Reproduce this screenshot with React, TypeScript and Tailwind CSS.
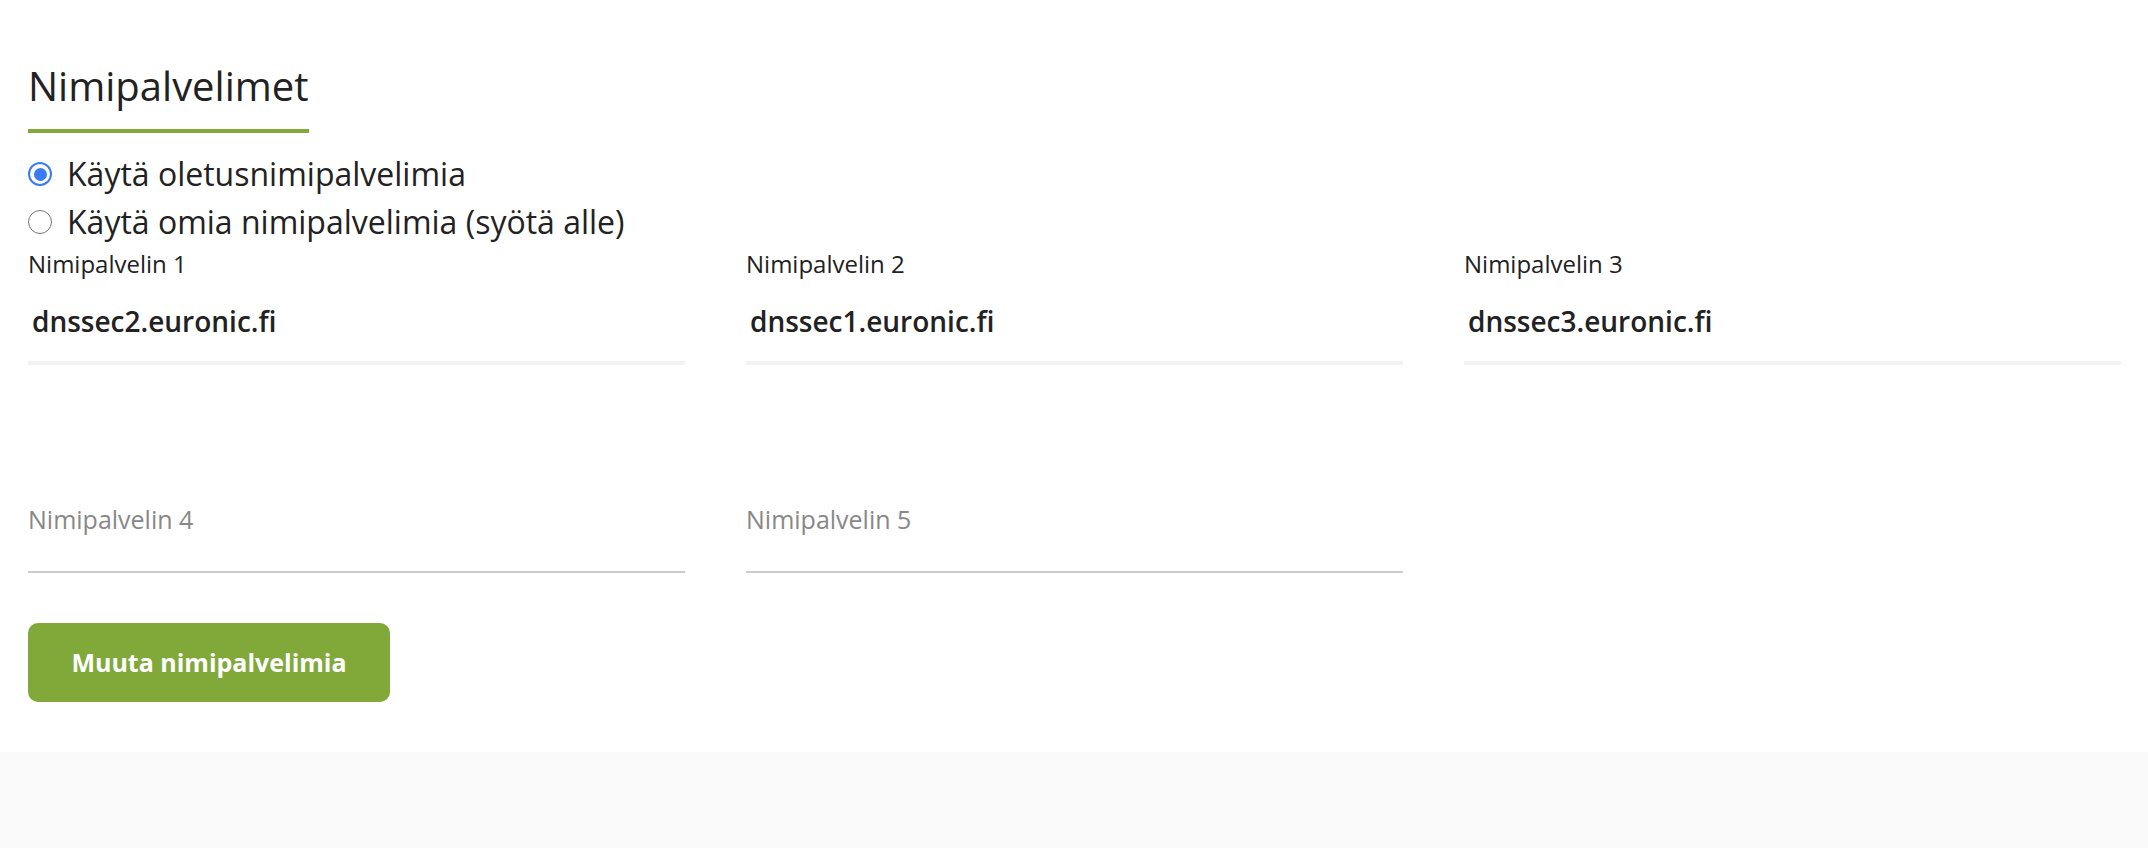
import { useState } from "react";

const servers = [
  { label: "Nimipalvelin 1", value: "dnssec2.euronic.fi" },
  { label: "Nimipalvelin 2", value: "dnssec1.euronic.fi" },
  { label: "Nimipalvelin 3", value: "dnssec3.euronic.fi" },
];

function Radio({
  checked,
  label,
  onClick,
}: {
  checked: boolean;
  label: string;
  onClick: () => void;
}) {
  return (
    <label onClick={onClick} className="flex h-[48px] cursor-pointer items-center gap-[15px]">
      {checked ? (
        <span className="flex h-[24px] w-[24px] shrink-0 items-center justify-center rounded-full border-[2.5px] border-[#3a7bf5]">
          <span className="h-[13px] w-[13px] rounded-full bg-[#3a7bf5]" />
        </span>
      ) : (
        <span className="h-[24px] w-[24px] shrink-0 rounded-full border-[1.5px] border-[#767676] bg-white" />
      )}
      <span className="text-[32px] leading-[48px] text-[#222]">{label}</span>
    </label>
  );
}

export default function App() {
  const [mode, setMode] = useState<"default" | "custom">("default");

  return (
    <div className="min-h-screen bg-[#f9f9f9] font-['Open_Sans',sans-serif]">
      <section className="bg-white pb-[50px] pl-[28px] pr-[27px] pt-[62px]">
        <h2 className="inline-block border-b-4 border-[#80a93a] pb-[19px] text-[40px] font-normal leading-[48px] text-[#222]">
          Nimipalvelimet
        </h2>

        {/* Radio options */}
        <div className="mt-[17px] flex flex-col">
          <Radio
            checked={mode === "default"}
            label="Käytä oletusnimipalvelimia"
            onClick={() => setMode("default")}
          />
          <Radio
            checked={mode === "custom"}
            label="Käytä omia nimipalvelimia (syötä alle)"
            onClick={() => setMode("custom")}
          />
        </div>

        {/* Name server fields */}
        <div className="mt-[2px] grid grid-cols-3 gap-x-[61px] gap-y-[109px]">
          {servers.map((s) => (
            <div key={s.label} className="flex flex-col">
              <span className="text-[24px] leading-[32px] text-[#222]">{s.label}</span>
              <input
                readOnly
                value={s.value}
                className="h-[85px] w-full border-b-4 border-[#f2f2f2] bg-transparent pl-[4px] text-[28px] font-semibold text-[#222] outline-none"
              />
            </div>
          ))}
          {["Nimipalvelin 4", "Nimipalvelin 5"].map((p) => (
            <input
              key={p}
              placeholder={p}
              className="h-[99px] w-full border-b-2 border-[#cccccc] bg-transparent pb-[8px] text-[25px] text-[#222] outline-none placeholder:text-[#888]"
            />
          ))}
        </div>

        <button className="mt-[50px] flex h-[79px] w-[362px] items-center justify-center rounded-[10px] bg-[#80a93a] text-[25px] font-bold text-white">
          Muuta nimipalvelimia
        </button>
      </section>
    </div>
  );
}
